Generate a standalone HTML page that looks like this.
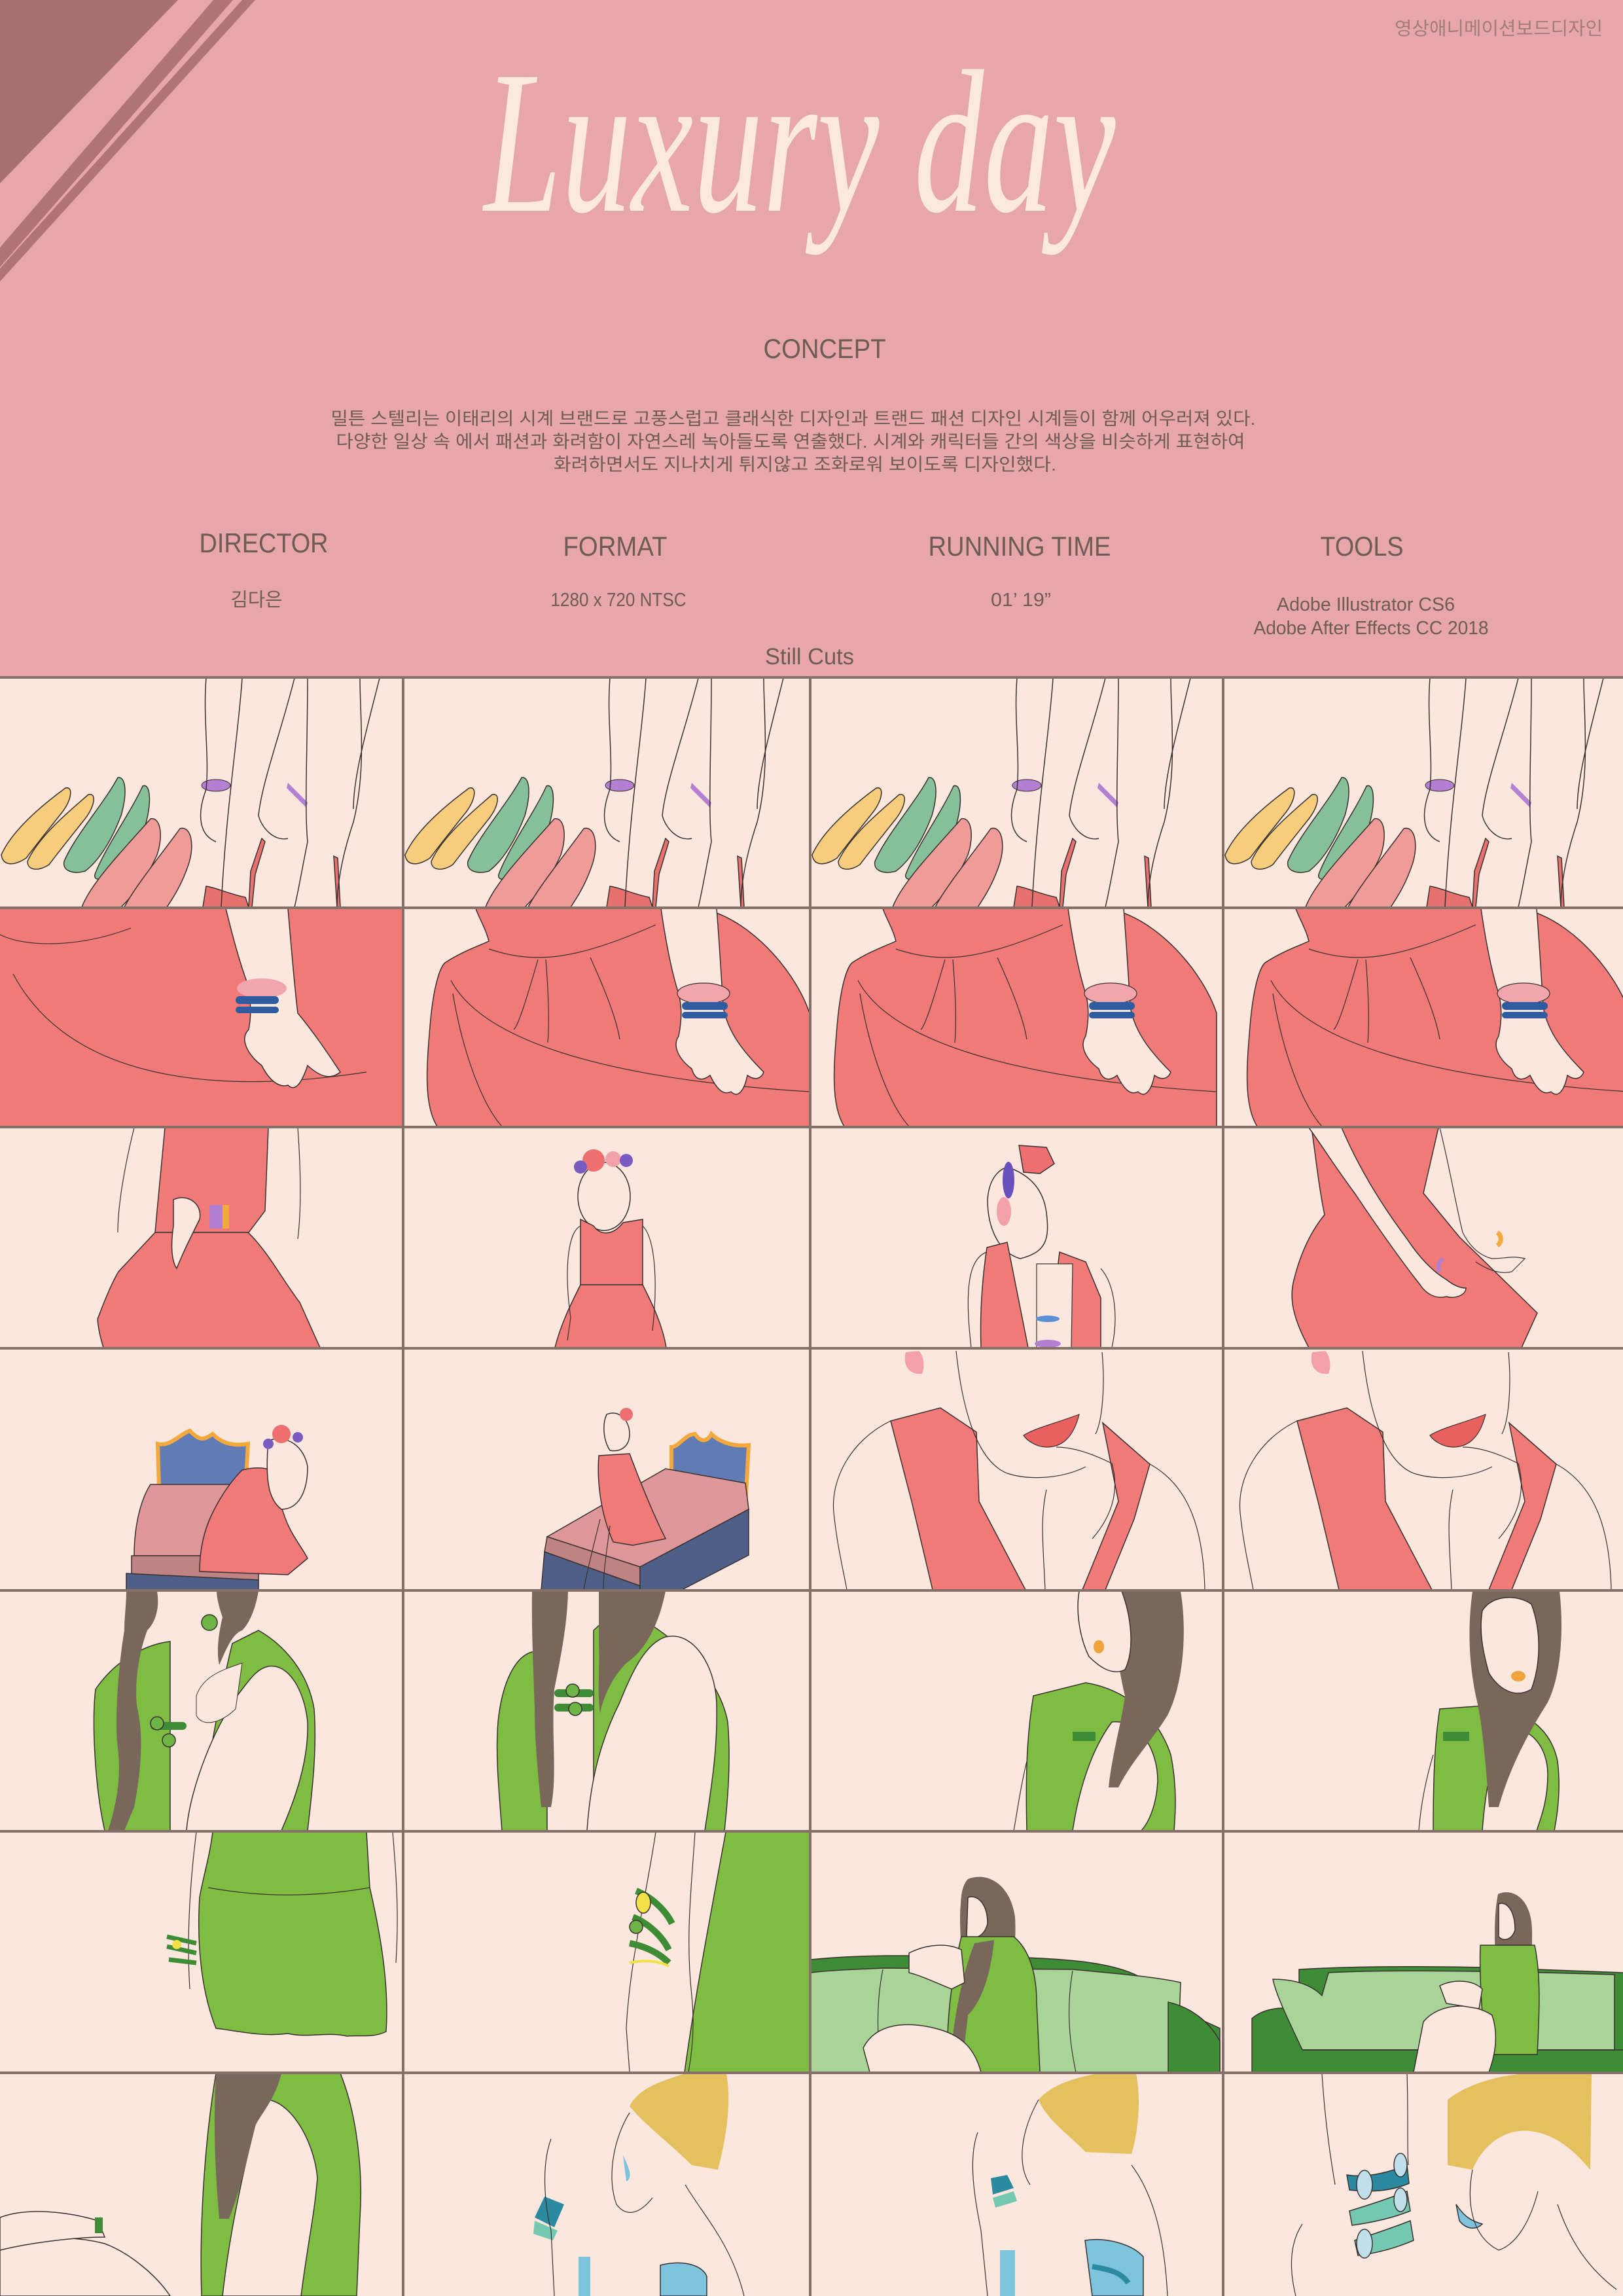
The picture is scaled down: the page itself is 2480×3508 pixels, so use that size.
<!DOCTYPE html>
<html><head><meta charset="utf-8">
<style>
html,body{margin:0;padding:0;background:#fbe7dd;}
svg{display:block}
</style></head>
<body>
<svg width="2480" height="3508" viewBox="0 0 2480 3508" xmlns="http://www.w3.org/2000/svg">
<defs>
<g id="shoes">
  <g stroke="#3a3030" stroke-width="1.5">
  <path d="M2,270 C20,230 70,190 100,168 C112,165 110,185 95,205 C75,230 55,255 40,275 C25,285 5,290 2,270Z" fill="#f6cd7c"/>
  <path d="M42,280 C60,240 110,200 135,178 C148,175 145,195 130,215 C110,240 90,265 75,285 C60,295 42,295 42,280Z" fill="#f6cd7c"/>
  <path d="M98,280 C115,240 160,190 180,152 C192,150 195,175 185,210 C170,250 150,280 130,295 C112,300 95,295 98,280Z" fill="#86c09a"/>
  <path d="M145,300 C160,260 200,205 218,165 C230,160 232,190 222,225 C208,265 188,292 168,305 C152,310 143,308 145,300Z" fill="#86c09a"/>
  <path d="M125,350 C140,310 200,250 230,215 C245,212 250,240 240,270 C225,305 205,330 185,350Z" fill="#ef9b98"/>
  <path d="M190,350 C205,320 250,265 275,230 C292,225 298,255 288,285 C278,315 265,335 255,350Z" fill="#ef9b98"/>
  <path d="M310,350 L315,318 C330,320 350,330 375,335 L380,350Z" fill="#e6716e"/>
  <path d="M383,295 L400,245 L405,250 L390,300 L385,350 L380,350Z" fill="#e6716e"/>
  <path d="M510,272 L515,350 L520,350 L516,275Z" fill="#e6716e"/>
  </g>
  <ellipse cx="330" cy="164" rx="22" ry="9" fill="#b27fd1" stroke="#3a3030" stroke-width="1"/>
  <path d="M440,160 L470,190 L468,198 L438,168Z" fill="#b27fd1"/>
  <g fill="none" stroke="#3a3030" stroke-width="1.5">
    <path d="M315,0 C310,60 320,120 315,170 C300,210 305,240 330,250"/>
    <path d="M370,0 C365,80 345,200 338,350"/>
    <path d="M450,0 C430,80 400,160 395,210 C400,230 420,250 440,245"/>
    <path d="M470,0 C470,100 465,200 470,250 C460,300 455,330 450,350"/>
    <path d="M550,0 C550,60 560,140 540,220 C520,280 515,320 515,350"/>
    <path d="M580,0 C560,80 540,150 540,200"/>
  </g>
</g>
<g id="skirt">
  <path d="M110,0 L395,0 L400,8 L478,7 C540,30 600,100 620,160 L620,333 L51,333 C30,300 35,240 40,180 C45,120 55,90 63,83 C90,65 120,55 130,50 C125,30 115,15 110,0Z" fill="#ef7a78" stroke="#3a3030" stroke-width="1.5"/>
  <g fill="none" stroke="#3a3030" stroke-width="1.2">
    <path d="M130,62 C200,85 260,80 385,25"/>
    <path d="M72,110 C120,200 300,260 620,280"/>
    <path d="M205,78 C190,130 175,180 168,185"/>
    <path d="M217,78 C222,140 222,180 220,205"/>
    <path d="M285,75 C310,130 325,170 330,200"/>
    <path d="M75,130 C90,220 120,300 150,333"/>
  </g>
  <path d="M393,0 L478,0 C482,50 485,100 488,150 C495,190 520,220 550,250 C545,262 535,262 525,255 C520,280 510,290 500,280 C490,285 480,280 468,255 C455,265 445,262 440,245 C420,230 410,210 420,195 C425,170 425,150 420,130 C410,100 400,50 393,0Z" fill="#fbe7dd" stroke="#3a3030" stroke-width="1.5"/>
  <ellipse cx="458" cy="130" rx="40" ry="16" fill="#f2a5ad" stroke="#3a3030" stroke-width="1.2"/>
  <rect x="425" y="143" width="70" height="12" rx="6" fill="#2f5ca0"/>
  <rect x="425" y="158" width="70" height="10" rx="5" fill="#2f5ca0"/>
</g>
<g id="vest">
  <path d="M122,110 L198,90 L253,127 L257,233 L328,368 L186,368 L154,233Z" fill="#ef7a78" stroke="#3a3030" stroke-width="1.5"/>
  <path d="M446,113 L518,176 L494,260 L450,368 L415,368 L470,233Z" fill="#ef7a78" stroke="#3a3030" stroke-width="1.5"/>
  <path d="M325,132 C345,120 370,115 410,100 C400,140 380,150 360,150 C345,150 330,140 325,132Z" fill="#e9615f" stroke="#3a3030" stroke-width="1.2"/>
  <path d="M145,5 C140,25 150,40 170,38 C175,25 172,10 165,3Z" fill="#f2a1a8"/>
  <g fill="none" stroke="#3a3030" stroke-width="1.2">
    <path d="M122,110 C60,140 30,200 35,250 C40,300 50,340 55,368"/>
    <path d="M518,176 C580,210 600,280 602,368"/>
    <path d="M222,3 C230,80 250,170 300,190 C330,200 380,200 420,180"/>
    <path d="M445,5 C450,60 445,110 435,130"/>
    <path d="M360,215 C350,260 355,300 358,368"/>
    <path d="M375,150 C400,150 430,160 460,175 C470,210 465,250 430,290"/>
  </g>
</g>
</defs>

<!-- header -->
<rect x="0" y="0" width="2480" height="1035" fill="#e7a7aa"/>
<polygon points="0,0 272,0 0,280" fill="#a66f72"/>
<polygon points="326,0 356,0 0,408 0,378" fill="#b07478"/>
<polygon points="370,0 390,0 0,430 0,410" fill="#b07478"/>

<g font-family="'Liberation Sans','Noto Sans CJK KR',sans-serif" fill="#6e5b56">
<text x="2449" y="53" font-size="28" text-anchor="end" textLength="318" lengthAdjust="spacingAndGlyphs" fill="#a07c7c">영상애니메이션보드디자인</text>
<text transform="translate(1222,322) scale(1,1.2)" x="0" y="0" font-family="'Liberation Serif',serif" font-style="italic" font-size="260" fill="#fbe9dc" text-anchor="middle" textLength="965" lengthAdjust="spacingAndGlyphs">Luxury day</text>
<text x="1260" y="547" font-size="42" text-anchor="middle" textLength="187" lengthAdjust="spacingAndGlyphs">CONCEPT</text>
<text x="1212" y="649" font-size="27" text-anchor="middle" textLength="1413" lengthAdjust="spacingAndGlyphs">밀튼 스텔리는 이태리의 시계 브랜드로 고풍스럽고 클래식한 디자인과 트랜드 패션 디자인 시계들이 함께 어우러져 있다.</text>
<text x="1208" y="684" font-size="27" text-anchor="middle" textLength="1389" lengthAdjust="spacingAndGlyphs">다양한 일상 속 에서 패션과 화려함이 자연스레 녹아들도록 연출했다. 시계와 캐릭터들 간의 색상을 비슷하게 표현하여</text>
<text x="1230" y="719" font-size="27" text-anchor="middle" textLength="768" lengthAdjust="spacingAndGlyphs">화려하면서도 지나치게 튀지않고  조화로워 보이도록 디자인했다.</text>
<text x="403" y="844" font-size="42" text-anchor="middle" textLength="197" lengthAdjust="spacingAndGlyphs">DIRECTOR</text>
<text x="940" y="849" font-size="42" text-anchor="middle" textLength="159" lengthAdjust="spacingAndGlyphs">FORMAT</text>
<text x="1558" y="849" font-size="42" text-anchor="middle" textLength="279" lengthAdjust="spacingAndGlyphs">RUNNING TIME</text>
<text x="2081" y="849" font-size="42" text-anchor="middle" textLength="127" lengthAdjust="spacingAndGlyphs">TOOLS</text>
<text x="392" y="926" font-size="29" text-anchor="middle" textLength="79" lengthAdjust="spacingAndGlyphs">김다은</text>
<text x="945" y="926" font-size="29" text-anchor="middle" textLength="207" lengthAdjust="spacingAndGlyphs">1280 x 720 NTSC</text>
<text x="1560" y="926" font-size="29" text-anchor="middle" textLength="92" lengthAdjust="spacingAndGlyphs">01’ 19”</text>
<text x="2087" y="933" font-size="29" text-anchor="middle" textLength="272" lengthAdjust="spacingAndGlyphs">Adobe Illustrator CS6</text>
<text x="2095" y="969" font-size="29" text-anchor="middle" textLength="359" lengthAdjust="spacingAndGlyphs">Adobe After Effects CC 2018</text>
<text x="1237" y="1015" font-size="35" text-anchor="middle" textLength="136" lengthAdjust="spacingAndGlyphs">Still Cuts</text>
</g>

<!-- grid background -->
<rect x="0" y="1035" width="2480" height="2473" fill="#fbe7dd"/>

<!-- ROW 0 shoes -->
<use href="#shoes" x="0" y="1036"/>
<use href="#shoes" x="617" y="1036"/>
<use href="#shoes" x="1239" y="1036"/>
<use href="#shoes" x="1870" y="1036"/>

<!-- ROW 1 skirts -->
<g transform="translate(0,1388)">
  <rect x="0" y="0" width="615" height="333" fill="#ef7a78"/>
  <path d="M0,40 C40,60 120,60 200,30" fill="none" stroke="#3a3030" stroke-width="1.2"/>
  <path d="M20,100 C100,250 300,290 560,250" fill="none" stroke="#3a3030" stroke-width="1.2"/>
  <path d="M345,0 L440,0 C445,60 450,120 455,160 C480,190 500,220 520,250 C505,262 490,258 470,240 C460,270 450,280 440,270 C425,275 410,260 400,240 C380,225 365,200 380,185 C385,160 382,140 380,120 C365,80 355,40 345,0Z" fill="#fbe7dd" stroke="#3a3030" stroke-width="1.5"/>
  <ellipse cx="400" cy="122" rx="38" ry="15" fill="#f2a5ad"/>
  <rect x="360" y="134" width="66" height="12" rx="6" fill="#2f5ca0"/>
  <rect x="360" y="150" width="66" height="10" rx="5" fill="#2f5ca0"/>
</g>
<use href="#skirt" x="617" y="1388"/>
<use href="#skirt" x="1239" y="1388"/>
<use href="#skirt" x="1870" y="1388"/>

<!-- ROW 2 -->
<g transform="translate(0,1723)" stroke="#3a3030" stroke-width="1.5">
  <path d="M252,0 L410,0 L405,127 L380,160 L237,160 L240,127Z" fill="#ef7a78"/>
  <path d="M237,160 L379,160 C410,190 430,230 458,267 L489,336 L158,336 C150,310 148,290 150,290 C165,250 175,230 181,220Z" fill="#ef7a78"/>
  <path d="M265,110 C285,100 310,115 305,140 C290,170 280,190 270,215 C260,200 262,170 265,150Z" fill="#fbe7dd"/>
  <rect x="320" y="118" width="22" height="36" fill="#b27fd1" stroke="none"/>
  <rect x="340" y="118" width="10" height="36" fill="#f3a93b" stroke="none"/>
  <g fill="none" stroke-width="1.2"><path d="M205,0 C190,60 180,120 180,160"/><path d="M455,0 C460,70 460,130 455,170"/></g>
</g>
<g transform="translate(617,1723)" stroke="#3a3030" stroke-width="1.5">
  <ellipse cx="306" cy="105" rx="40" ry="52" fill="#fbe7dd"/>
  <circle cx="290" cy="50" r="17" fill="#ee6f70" stroke="none"/>
  <circle cx="270" cy="60" r="10" fill="#7a5bc2" stroke="none"/>
  <circle cx="320" cy="48" r="12" fill="#f3a1a8" stroke="none"/>
  <circle cx="340" cy="50" r="10" fill="#7a5bc2" stroke="none"/>
  <path d="M270,140 L290,150 C300,165 320,165 335,145 L365,140 L365,240 L270,240Z" fill="#ef7a78"/>
  <path d="M270,240 L365,240 C380,270 395,300 401,336 L231,336 C240,300 255,270 270,240Z" fill="#ef7a78"/>
  <g fill="none" stroke-width="1.2"><path d="M270,150 C250,160 245,220 255,290 L250,325"/><path d="M365,150 C385,170 388,240 380,310"/></g>
</g>
<g transform="translate(1239,1723)" stroke="#3a3030" stroke-width="1.5">
  <path d="M300,60 C330,70 355,90 360,130 C365,170 360,190 320,200 C285,190 270,150 270,110 C272,80 285,65 300,60Z" fill="#fbe7dd"/>
  <path d="M318,27 L360,30 L372,55 L350,70 L325,68Z" fill="#ee6f70"/>
  <ellipse cx="302" cy="80" rx="9" ry="28" fill="#6a4fbf" stroke="none"/>
  <ellipse cx="295" cy="128" rx="11" ry="22" fill="#f3a1a8" stroke="none"/>
  <path d="M269,183 L300,175 L332,336 L260,336 C258,280 262,230 269,183Z" fill="#ef7a78"/>
  <path d="M380,190 L420,205 L443,260 L443,336 L372,336 C370,280 375,230 380,190Z" fill="#ef7a78"/>
  <path d="M345,208 L400,208 L398,336 L345,336Z" fill="#fbe7dd" stroke-width="1.2"/>
  <ellipse cx="362" cy="292" rx="18" ry="5" fill="#5b8fd6" stroke="none"/>
  <ellipse cx="362" cy="330" rx="20" ry="6" fill="#b27fd1" stroke="none"/>
  <g fill="none" stroke-width="1.2"><path d="M269,190 C240,200 235,250 245,336"/><path d="M443,215 C465,240 470,290 460,336"/></g>
</g>
<g transform="translate(1870,1723)" stroke="#3a3030" stroke-width="1.5">
  <path d="M134,0 L328,0 L305,100 L360,167 L479,283 L455,336 L130,336 C105,290 100,260 107,233 C120,180 140,150 154,133 C145,90 140,40 134,0Z" fill="#ef7a78"/>
  <path d="M130,0 L180,0 C210,70 250,130 280,170 C300,200 320,220 340,232 C350,240 360,245 370,245 C370,255 355,262 340,258 C325,262 310,255 300,240 C280,215 240,160 200,100 C170,60 145,20 130,0Z" fill="#fbe7dd"/>
  <path d="M330,0 C345,60 355,120 365,160 C375,180 390,195 410,200 C430,200 440,195 460,200 L440,220 C420,225 400,215 385,205" fill="none" stroke-width="1.2"/>
  <path d="M418,160 C425,165 425,175 418,180" fill="none" stroke="#f3a93b" stroke-width="7"/>
  <path d="M335,200 C328,205 326,215 330,220" fill="none" stroke="#b27fd1" stroke-width="6"/>
</g>

<!-- ROW 3 -->
<g transform="translate(0,2061)" stroke="#3a3030" stroke-width="1.5">
  <path d="M241,145 C260,150 275,130 290,125 C305,140 310,140 325,130 C335,140 350,150 379,145 L375,213 L243,213Z" fill="#617cb5" stroke="#f3a93b" stroke-width="6"/>
  <path d="M230,207 L371,207 L360,316 L205,316 C205,270 215,230 230,207Z" fill="#dd9799"/>
  <path d="M201,316 L395,316 L395,353 L201,345Z" fill="#c08383"/>
  <path d="M193,343 L395,353 L395,368 L193,368Z" fill="#4f6088"/>
  <path d="M370,185 C390,180 410,180 420,190 L430,240 C440,280 460,300 470,320 L440,345 L305,340 C305,300 315,270 325,250 C340,220 355,200 370,185Z" fill="#ef7a78"/>
  <path d="M410,140 C440,130 465,150 470,180 C470,220 455,245 430,245 C410,230 405,200 410,140Z" fill="#fbe7dd"/>
  <circle cx="430" cy="130" r="14" fill="#ee6f70" stroke="none"/>
  <circle cx="410" cy="145" r="8" fill="#7a5bc2" stroke="none"/>
  <circle cx="455" cy="135" r="8" fill="#7a5bc2" stroke="none"/>
</g>
<g transform="translate(617,2061)" stroke="#3a3030" stroke-width="1.5">
  <path d="M409,150 C420,150 430,130 445,130 C455,145 465,140 470,130 C480,140 500,150 527,147 L522,240 L409,240Z" fill="#617cb5" stroke="#f3a93b" stroke-width="6"/>
  <path d="M219,287 L400,183 L522,205 L527,245 L361,333 L219,287Z" fill="#dd9799"/>
  <path d="M219,287 L361,333 L361,362 L215,310Z" fill="#c08383"/>
  <path d="M215,310 L361,362 L361,368 L210,368Z" fill="#4f6088"/>
  <path d="M361,333 L527,245 L527,315 L425,368 L361,368Z" fill="#4f6088"/>
  <path d="M298,163 L345,160 C360,200 380,250 400,290 L350,300 L320,295 C300,250 295,200 298,163Z" fill="#ef7a78"/>
  <path d="M310,100 C330,92 345,110 345,130 C345,150 330,158 315,155 C305,140 303,115 310,100Z" fill="#fbe7dd"/>
  <circle cx="340" cy="100" r="10" fill="#ee6f70" stroke="none"/>
  <g fill="none" stroke-width="1.2"><path d="M300,260 C290,300 280,340 275,368"/><path d="M315,270 C310,310 305,340 305,368"/></g>
</g>
<use href="#vest" x="1239" y="2061"/>
<use href="#vest" x="1860" y="2061"/>

<!-- ROW 4 green -->
<g transform="translate(0,2431)" stroke="#3a3030" stroke-width="1.5">
  <path d="M146,150 C180,100 230,80 260,77 L260,366 L160,366 C145,300 140,200 146,150Z" fill="#7ebd42"/>
  <path d="M355,80 L395,60 C430,80 470,120 480,180 C485,250 475,320 470,366 L300,366 C320,260 335,160 355,80Z" fill="#7ebd42"/>
  <path d="M410,115 C440,110 465,150 470,200 C472,260 450,320 430,366 L285,366 C290,300 330,200 370,150 C385,130 395,118 410,115Z" fill="#fbe7dd"/>
  <path d="M193,0 L240,0 C245,30 235,50 225,60 C210,100 205,150 210,180 C220,220 215,280 205,330 L190,366 L165,366 C180,320 185,280 180,240 C175,200 180,120 190,60 C190,40 193,20 193,0Z" fill="#7a675b" stroke="none"/>
  <path d="M331,0 L395,0 C390,30 380,50 370,60 C355,65 345,90 335,113 C330,90 335,60 340,40 C335,25 331,10 331,0Z" fill="#7a675b" stroke="none"/>
  <path d="M300,160 C310,130 340,120 370,110 L360,180 C340,200 310,210 300,190Z" fill="#fbe7dd" stroke-width="1"/>
  <rect x="230" y="200" width="55" height="12" rx="6" fill="#3f8c37" stroke="none"/>
  <circle cx="240" cy="202" r="10" fill="#6fb545"/><circle cx="258" cy="228" r="10" fill="#6fb545"/>
  <circle cx="320" cy="48" r="12" fill="#6fb545"/>
</g>
<g transform="translate(617,2431)" stroke="#3a3030" stroke-width="1.5">
  <path d="M144,200 C150,140 170,100 196,93 L219,93 L219,366 L150,366 C145,300 140,250 144,200Z" fill="#7ebd42"/>
  <path d="M290,60 L330,23 C400,60 480,120 495,200 C500,260 495,320 490,366 L290,366Z" fill="#7ebd42"/>
  <path d="M400,70 C440,60 475,110 478,170 C480,240 470,300 460,366 L280,366 C285,290 300,230 330,170 C350,120 370,80 400,70Z" fill="#fbe7dd"/>
  <path d="M196,0 L251,0 C250,50 240,100 230,150 C225,220 235,280 225,330 L210,330 C205,280 200,230 200,180 C198,120 195,60 196,0Z" fill="#7a675b" stroke="none"/>
  <path d="M298,0 L400,0 C390,50 370,90 340,110 C320,130 305,160 300,187 C295,150 300,120 298,80Z" fill="#7a675b" stroke="none"/>
  <rect x="230" y="150" width="60" height="12" rx="6" fill="#3f8c37" stroke="none"/>
  <rect x="230" y="172" width="60" height="12" rx="6" fill="#3f8c37" stroke="none"/>
  <circle cx="258" cy="152" r="10" fill="#6fb545"/><circle cx="262" cy="180" r="10" fill="#6fb545"/>
</g>
<g transform="translate(1239,2431)" stroke="#3a3030" stroke-width="1.5">
  <path d="M340,160 L420,140 C480,150 530,190 550,250 C560,300 557,340 555,366 L330,366 C328,280 330,220 340,160Z" fill="#7ebd42"/>
  <path d="M460,200 C500,195 530,240 530,290 C528,330 515,355 505,366 L400,366 C410,300 430,240 460,200Z" fill="#fbe7dd"/>
  <path d="M460,0 L565,0 C575,60 570,140 545,190 C520,230 490,260 470,300 L455,300 C460,250 475,200 480,160 C470,120 462,60 460,0Z" fill="#7a675b" stroke="none"/>
  <path d="M410,0 L475,0 C490,40 495,90 480,120 C460,130 440,115 425,100 C410,70 405,30 410,0Z" fill="#fbe7dd"/>
  <ellipse cx="440" cy="85" rx="8" ry="10" fill="#f0a33a" stroke="none"/>
  <rect x="400" y="215" width="35" height="14" fill="#3f8c37" stroke="none"/>
  <path d="M330,260 C320,300 315,340 310,366" fill="none" stroke-width="1.2"/>
</g>
<g transform="translate(1870,2431)" stroke="#3a3030" stroke-width="1.5">
  <path d="M330,180 L400,175 C460,180 500,210 510,260 C515,300 510,340 505,366 L320,366 C320,290 322,230 330,180Z" fill="#7ebd42"/>
  <path d="M430,210 C470,205 495,240 495,280 C495,320 485,345 478,366 L395,366 C400,300 410,250 430,210Z" fill="#fbe7dd"/>
  <path d="M380,0 L513,0 C520,60 515,130 495,170 C470,210 440,260 420,330 L405,330 C400,260 395,200 385,160 C375,110 372,60 380,0Z" fill="#7a675b" stroke="none"/>
  <path d="M395,30 C410,5 450,5 470,20 C485,60 485,110 470,150 C445,165 420,150 405,125 C395,90 390,60 395,30Z" fill="#fbe7dd"/>
  <ellipse cx="450" cy="130" rx="11" ry="8" fill="#f0a33a" stroke="none"/>
  <rect x="335" y="215" width="40" height="14" fill="#3f8c37" stroke="none"/>
  <path d="M320,250 C305,300 300,340 298,366" fill="none" stroke-width="1.2"/>
</g>

<!-- ROW 5 -->
<g transform="translate(0,2799)" stroke="#3a3030" stroke-width="1.5">
  <path d="M325,0 L560,0 L565,85 C580,150 595,230 590,305 C570,315 550,310 530,312 C500,305 470,315 440,308 C400,313 370,305 330,300 C310,250 300,180 305,100 C310,70 320,40 325,0Z" fill="#7ebd42"/>
  <path d="M318,85 C400,100 480,100 565,85" fill="none" stroke-width="1.2"/>
  <g fill="none" stroke-width="1.2"><path d="M300,0 C290,80 285,160 290,240"/><path d="M600,0 C605,60 610,120 605,200"/></g>
  <path d="M255,160 L300,170 M255,175 L300,185 M258,195 L300,200" stroke="#3f8c37" stroke-width="7"/>
  <circle cx="270" cy="172" r="7" fill="#f2e047" stroke="none"/>
</g>
<g transform="translate(617,2799)" stroke="#3a3030" stroke-width="1.5">
  <path d="M492,0 L620,0 L620,367 L429,367 C445,250 470,120 492,0Z" fill="#7ebd42"/>
  <g fill="none" stroke-width="1.2"><path d="M385,0 C370,100 345,200 340,300 L345,367"/><path d="M445,0 C440,80 430,160 440,250 C445,300 440,340 435,367"/></g>
  <path d="M355,90 C380,100 400,120 410,140 M350,130 C375,140 395,160 405,180 M345,170 C370,175 390,185 405,200" stroke="#3f8c37" stroke-width="10" fill="none"/>
  <ellipse cx="366" cy="108" rx="11" ry="16" fill="#f2e047"/>
  <circle cx="355" cy="145" r="10" fill="#6fb545"/>
  <path d="M345,200 C370,195 390,197 405,205" stroke="#f2e047" stroke-width="4" fill="none"/>
</g>
<g transform="translate(1239,2799)" stroke="#3a3030" stroke-width="1.5">
  <path d="M0,195 C100,185 200,190 330,192 C400,195 460,200 500,220 C530,230 550,250 560,270 L625,300 L625,367 L0,367Z" fill="#3f8c37"/>
  <path d="M0,215 C40,210 80,210 110,208 L400,210 C450,215 520,220 565,230 L560,367 L0,367Z" fill="#a8d597"/>
  <path d="M546,260 C590,270 615,300 625,320 L625,367 L546,367Z" fill="#3f8c37"/>
  <g fill="none" stroke-width="1.2"><path d="M110,210 C100,260 100,320 110,367"/><path d="M400,212 C390,270 395,320 405,367"/></g>
  <path d="M240,72 C270,60 305,80 312,130 C315,180 305,230 290,266 L230,266 C235,210 225,150 229,110 C230,90 233,80 240,72Z" fill="#7a675b" stroke="none"/>
  <path d="M240,100 C255,95 270,110 270,140 C265,160 250,165 238,160Z" fill="#fbe7dd"/>
  <path d="M230,160 L310,160 C335,180 345,220 345,260 L350,367 L210,367 C205,300 215,220 230,160Z" fill="#7ebd42"/>
  <path d="M250,170 L280,165 C275,220 260,260 240,280 L230,367 L212,367 C215,300 230,220 250,170Z" fill="#7a675b" stroke="none"/>
  <path d="M80,330 C100,290 150,290 190,300 C230,310 250,330 260,367 L90,367Z" fill="#fbe7dd"/>
  <path d="M150,185 C180,170 210,170 230,180 L235,230 L215,240 C190,230 170,220 150,215Z" fill="#fbe7dd"/>
</g>
<g transform="translate(1870,2799)" stroke="#3a3030" stroke-width="1.5">
  <path d="M115,210 C200,205 300,205 400,207 L611,215 L611,367 L43,367 L43,285 C60,270 90,265 115,273Z" fill="#3f8c37"/>
  <path d="M75,225 C100,225 130,230 150,250 L160,215 C250,210 400,212 597,218 L597,333 L120,333 C100,290 80,250 75,225Z" fill="#a8d597"/>
  <path d="M120,333 L611,333" fill="none"/>
  <path d="M419,95 C440,85 470,100 471,150 C472,200 465,240 460,266 L420,266 C415,200 410,140 419,95Z" fill="#7a675b" stroke="none"/>
  <path d="M420,110 C432,105 445,120 445,150 C440,165 428,168 420,160Z" fill="#fbe7dd"/>
  <path d="M392,173 L475,173 C485,220 482,280 479,340 L400,340 C395,280 390,220 392,173Z" fill="#7ebd42"/>
  <path d="M305,290 C330,260 380,260 410,280 C420,310 415,340 405,367 L290,367Z" fill="#fbe7dd"/>
  <path d="M330,235 C350,225 380,225 395,240 L390,270 L340,262Z" fill="#fbe7dd"/>
</g>

<!-- ROW 6 -->
<g transform="translate(0,3168)" stroke="#3a3030" stroke-width="1.5">
  <path d="M330,0 L520,0 C545,60 555,150 550,220 L545,340 L308,340 C305,250 310,120 330,0Z" fill="#7ebd42"/>
  <path d="M400,40 C440,35 480,100 485,160 C480,220 470,260 460,340 L340,340 C350,250 370,150 400,40Z" fill="#fbe7dd"/>
  <path d="M330,0 L430,0 C420,40 400,60 390,80 C380,120 370,170 350,222 L335,222 C330,160 325,90 330,0Z" fill="#7a675b" stroke="none"/>
  <path d="M0,270 C40,250 100,245 160,260 C200,275 240,310 260,340 L0,340Z" fill="#fbe7dd"/>
  <path d="M0,220 C40,205 100,210 150,225 L160,250 C110,250 40,260 0,270Z" fill="#fbe7dd"/>
  <rect x="145" y="220" width="12" height="24" fill="#3f8c37" stroke="none"/>
</g>
<g transform="translate(617,3168)" stroke="#3a3030" stroke-width="1.5">
  <path d="M345,50 C360,20 400,10 430,0 L493,0 C500,40 495,90 480,147 L440,140 C410,110 370,80 345,50Z" fill="#e4c05e" stroke="none"/>
  <path d="M267,280 L285,280 L285,340 L267,340Z" fill="#7ec3de" stroke="none"/>
  <path d="M392,293 C420,285 455,290 463,310 L463,340 L392,340Z" fill="#7ec3de"/>
  <path d="M200,220 L215,188 L245,200 L230,235Z" fill="#2b8aa0" stroke="none"/>
  <path d="M200,225 L235,240 L228,255 L198,245Z" fill="#74c7b0" stroke="none"/>
  <path d="M335,125 C345,145 350,160 340,165Z" fill="#7ec3de" stroke="none"/>
  <g fill="none" stroke-width="1.2"><path d="M345,60 C320,100 310,160 325,200 C340,220 360,215 380,190"/><path d="M225,100 C210,140 215,200 225,240 L230,340"/><path d="M430,170 C460,220 500,260 520,340"/></g>
</g>
<g transform="translate(1239,3168)" stroke="#3a3030" stroke-width="1.5">
  <path d="M348,40 C370,15 410,5 440,0 L497,0 C505,40 500,90 490,123 L420,120 C390,90 360,70 348,40Z" fill="#e4c05e" stroke="none"/>
  <path d="M289,270 L312,270 L312,340 L289,340Z" fill="#7ec3de" stroke="none"/>
  <path d="M419,255 C450,250 490,260 508,280 L508,340 L430,340Z" fill="#7ec3de"/>
  <path d="M275,160 L300,155 L310,175 L278,185Z" fill="#2b8aa0" stroke="none"/>
  <path d="M278,190 L310,180 L315,195 L282,205Z" fill="#74c7b0" stroke="none"/>
  <path d="M430,295 C460,300 475,305 485,320" stroke="#2b8aa0" stroke-width="8" fill="none"/>
  <g fill="none" stroke-width="1.2"><path d="M348,40 C320,90 315,140 335,170"/><path d="M255,90 C240,130 250,190 260,240 L270,340"/><path d="M490,140 C520,180 540,240 545,340"/></g>
</g>
<g transform="translate(1870,3168)" stroke="#3a3030" stroke-width="1.5">
  <path d="M342,40 C380,10 440,0 470,0 L562,0 L560,147 C545,130 520,100 480,90 C440,80 400,100 380,147 L342,140Z" fill="#e4c05e" stroke="none"/>
  <path d="M188,155 C220,160 255,150 280,140 L283,168 C255,180 225,182 192,178Z" fill="#2b8aa0"/>
  <path d="M192,210 C225,200 255,190 280,180 L285,210 C255,222 225,228 196,232Z" fill="#74c7b0"/>
  <path d="M200,255 C230,245 260,235 285,225 L290,255 C260,268 230,275 205,278Z" fill="#74c7b0"/>
  <ellipse cx="215" cy="170" rx="12" ry="22" fill="#bfe0ea"/>
  <ellipse cx="270" cy="140" rx="10" ry="18" fill="#bfe0ea"/>
  <ellipse cx="270" cy="193" rx="10" ry="18" fill="#bfe0ea"/>
  <ellipse cx="215" cy="260" rx="12" ry="22" fill="#bfe0ea"/>
  <path d="M355,200 C365,215 375,225 395,230 C385,240 370,238 360,225Z" fill="#7ec3de"/>
  <g fill="none" stroke-width="1.2"><path d="M150,0 C155,80 165,140 170,170"/><path d="M280,0 C282,60 280,120 282,140"/><path d="M380,147 C370,200 380,250 420,270 C450,260 470,220 480,180"/><path d="M510,200 C530,260 560,300 600,330"/><path d="M120,230 C100,260 100,300 110,340"/></g>
</g>

<!-- grid lines -->
<g stroke="#86706a" stroke-width="4">
  <line x1="0" y1="1035" x2="2480" y2="1035"/>
  <line x1="0" y1="1387" x2="2480" y2="1387"/>
  <line x1="0" y1="1722" x2="2480" y2="1722"/>
  <line x1="0" y1="2060" x2="2480" y2="2060"/>
  <line x1="0" y1="2430" x2="2480" y2="2430"/>
  <line x1="0" y1="2798" x2="2480" y2="2798"/>
  <line x1="0" y1="3167" x2="2480" y2="3167"/>
  <line x1="616" y1="1035" x2="616" y2="3508"/>
  <line x1="1238" y1="1035" x2="1238" y2="3508"/>
  <line x1="1869" y1="1035" x2="1869" y2="3508"/>
</g>
</svg>
</body></html>
